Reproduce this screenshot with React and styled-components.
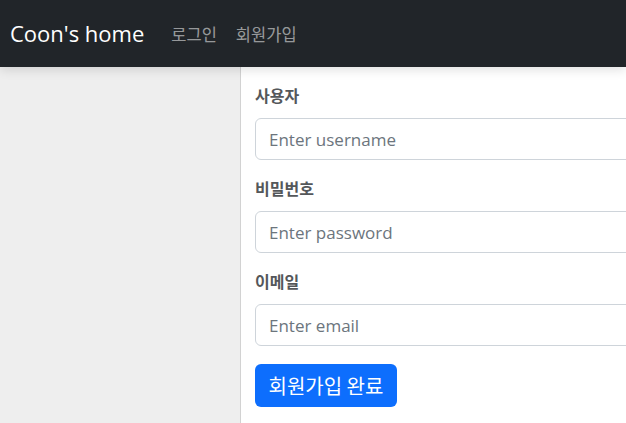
import React from "react";
import styled, { createGlobalStyle } from "styled-components";

const Global = createGlobalStyle`
  html, body { margin: 0; padding: 0; height: 100%; overflow: hidden; }
  body { font-family: "Noto Sans", "Noto Sans CJK KR", sans-serif; background: #fff; color: #212529; }
  #root { height: 100%; }
  * { box-sizing: border-box; }
`;

const Page = styled.div`
  display: flex;
  flex-direction: column;
  height: 100vh;
`;

const NavBar = styled.nav`
  position: relative;
  z-index: 2;
  height: 67px;
  flex: none;
  background: #212529;
  display: flex;
  align-items: center;
  padding: 0 10px;
  box-shadow: 0 3px 10px rgba(0, 0, 0, 0.12);
`;

const Brand = styled.a`
  color: #fff;
  font-family: "Open Sans", "Noto Sans CJK KR", sans-serif;
  font-size: 22px;
  line-height: 1;
  text-decoration: none;
  margin-right: 27px;
  padding-bottom: 2px;
`;

const NavLinks = styled.div`
  display: flex;
  gap: 19px;
`;

const NavLink = styled.a`
  color: rgba(255, 255, 255, 0.55);
  font-family: "Noto Sans CJK KR", sans-serif;
  font-size: 16.5px;
  text-decoration: none;
`;

const Body = styled.div`
  display: flex;
  flex: 1;
  min-height: 0;
`;

const Side = styled.aside`
  width: 241px;
  flex: none;
  background: #eeeeee;
  border-right: 1px solid #d2d2d2;
`;

const Main = styled.main`
  flex: 1;
  padding: 16px 0 0 14px;
  overflow: hidden;
`;

const Form = styled.form`
  display: flex;
  flex-direction: column;
  width: 520px;
`;

const Group = styled.div`
  display: flex;
  flex-direction: column;
  margin-bottom: 16px;
`;

const Label = styled.label`
  font-family: "Noto Sans CJK KR", sans-serif;
  font-size: 16px;
  font-weight: 700;
  color: #54575a;
  line-height: 24px;
  margin-bottom: 11px;
`;

const Input = styled.input`
  height: 42px;
  width: 100%;
  padding: 0 13px;
  font-family: "Open Sans", "Noto Sans CJK KR", sans-serif;
  font-size: 17px;
  color: #212529;
  background: #fff;
  border: 1px solid #ced4da;
  border-radius: 6px;
  outline: none;
  &::placeholder { color: #6c757d; }
`;

const Button = styled.button`
  align-self: flex-start;
  height: 43px;
  margin-top: 2px;
  padding: 0 13.5px;
  background: #0d6efd;
  color: #fff;
  border: none;
  border-radius: 6px;
  font-family: "Noto Sans CJK KR", sans-serif;
  font-size: 20px;
  cursor: pointer;
`;

const fields = [
  { label: "사용자", placeholder: "Enter username", type: "text" },
  { label: "비밀번호", placeholder: "Enter password", type: "password" },
  { label: "이메일", placeholder: "Enter email", type: "email" },
];

export default function App() {
  return (
    <Page>
      <Global />
      <NavBar>
        <Brand href="#">Coon's home</Brand>
        <NavLinks>
          <NavLink href="#">로그인</NavLink>
          <NavLink href="#">회원가입</NavLink>
        </NavLinks>
      </NavBar>
      <Body>
        <Side />
        <Main>
          <Form onSubmit={(e) => e.preventDefault()}>
            {fields.map((f) => (
              <Group key={f.label}>
                <Label>{f.label}</Label>
                <Input type={f.type} placeholder={f.placeholder} />
              </Group>
            ))}
            <Button type="submit">회원가입 완료</Button>
          </Form>
        </Main>
      </Body>
    </Page>
  );
}
